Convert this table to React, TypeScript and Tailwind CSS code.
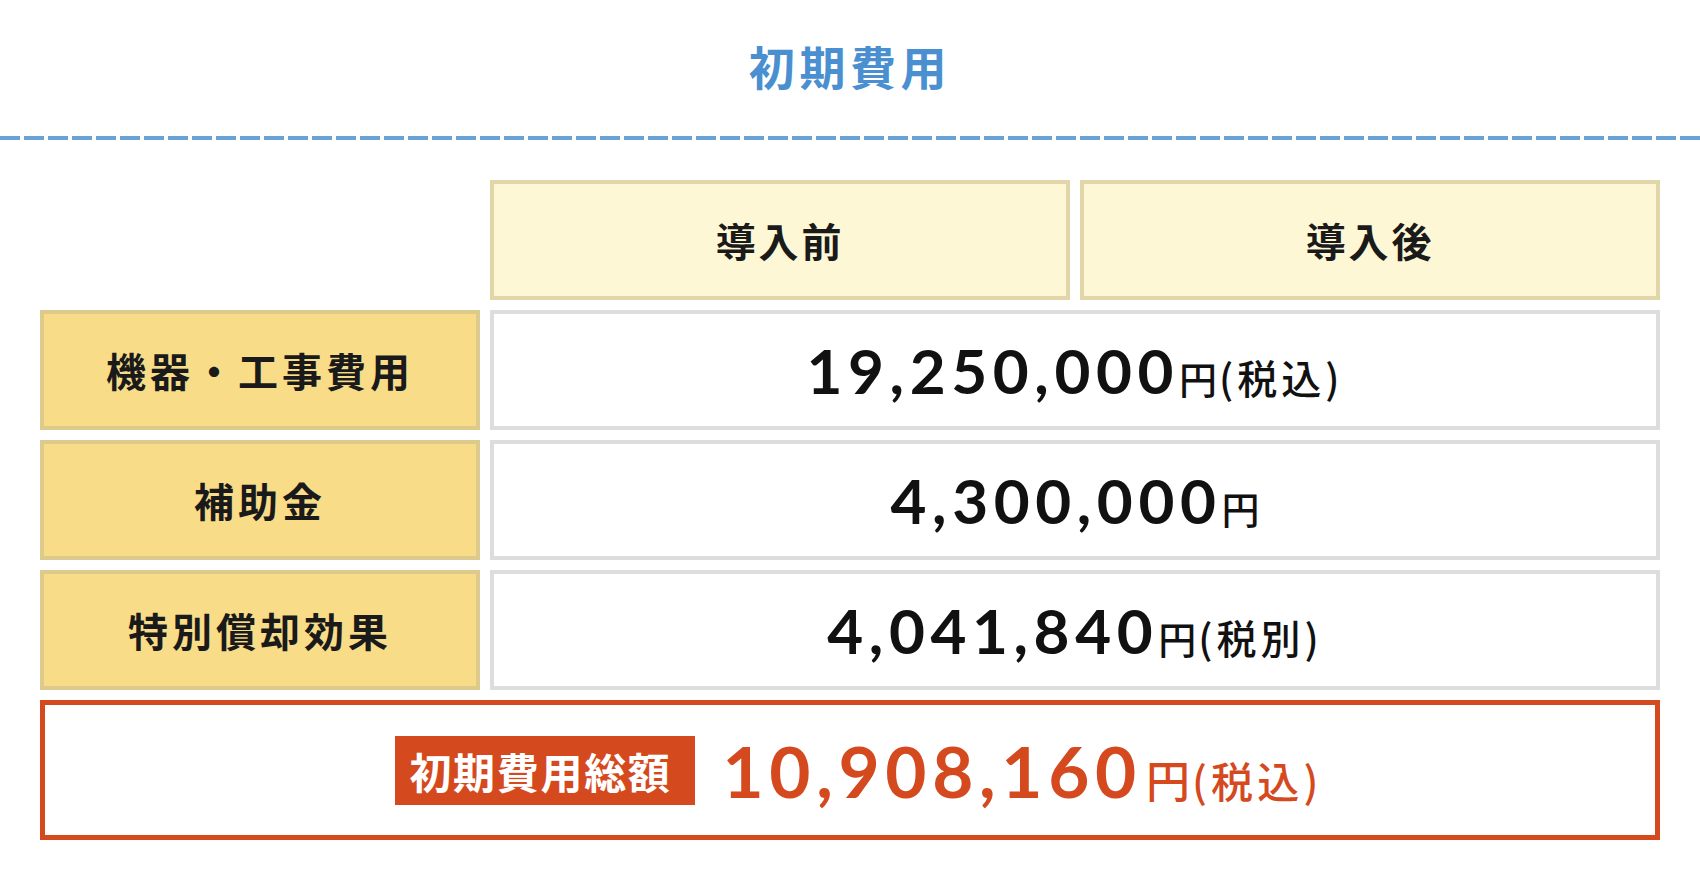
import React from 'react';

const jp = "font-['Noto_Sans_CJK_JP','Noto_Sans',sans-serif]";
const num = "font-['Lato','Noto_Sans_CJK_JP',sans-serif]";

interface ValueRowProps {
  label: string;
  amount: string;
  note?: string;
}

const ValueRow: React.FC<ValueRowProps> = ({ label, amount, note }) => (
  <>
    <div
      className={`h-[120px] flex items-center justify-center bg-[#f8dc88] border-4 border-[#dccb8c] text-[40px] font-bold tracking-[0.1em] text-[#1a1a1a] ${jp}`}
    >
      {label}
    </div>
    <div className="col-span-2 h-[120px] flex items-center justify-center bg-white border-4 border-[#dddddd]">
      <div className="flex items-baseline text-[#111]">
        <span className={`text-[62px] font-bold tracking-[0.09em] leading-none ${num}`}>{amount}</span>
        <span className={`text-[38px] font-medium leading-none ${jp}`}>円</span>
        {note && <span className={`ml-[2px] text-[40px] font-medium leading-none tracking-[0.1em] ${jp}`}>{note}</span>}
      </div>
    </div>
  </>
);

export default function App() {
  return (
    <div className="w-[1700px] h-[880px] bg-white overflow-hidden">
      {/* Title */}
      <div className="h-[136px] pb-[6px] flex items-center justify-center">
        <h2 className={`text-[46px] font-bold tracking-[0.1em] text-[#4a90d0] ${jp}`}>初期費用</h2>
      </div>
      <div className="h-[4px] bg-[repeating-linear-gradient(to_right,#68a2d8_0px,#68a2d8_20px,transparent_20px,transparent_24px)]" />

      {/* Table */}
      <div className="mt-[40px] px-[40px] grid grid-cols-[440px_580px_580px] gap-[10px]">
        <div />
        <div className={`h-[120px] flex items-center justify-center bg-[#fef7d5] border-4 border-[#e0d6a7] text-[40px] font-bold tracking-[0.07em] text-[#1a1a1a] ${jp}`}>
          導入前
        </div>
        <div className={`h-[120px] flex items-center justify-center bg-[#fef7d5] border-4 border-[#e0d6a7] text-[40px] font-bold tracking-[0.07em] text-[#1a1a1a] ${jp}`}>
          導入後
        </div>

        <ValueRow label="機器・工事費用" amount="19,250,000" note="(税込)" />
        <ValueRow label="補助金" amount="4,300,000" />
        <ValueRow label="特別償却効果" amount="4,041,840" note="(税別)" />

        {/* Total */}
        <div className="col-span-3 h-[140px] flex items-center justify-center pl-[18px] border-[5px] border-[#d5491f] bg-white">
          <div className="flex items-center gap-[27px]">
            <div className={`w-[300px] h-[69px] flex items-center pl-[14px] bg-[#d5491f] text-white text-[42px] font-bold tracking-[0.04em] ${jp}`}>
              初期費用総額
            </div>
            <div className="flex items-baseline text-[#d5491f]">
              <span className={`text-[71px] font-bold tracking-[0.08em] leading-none ${num}`}>10,908,160</span>
              <span className={`ml-[4px] text-[44px] font-medium leading-none ${jp}`}>円</span>
              <span className={`ml-[2px] text-[42px] font-medium leading-none tracking-[0.1em] ${jp}`}>(税込)</span>
            </div>
          </div>
        </div>
      </div>
    </div>
  );
}
